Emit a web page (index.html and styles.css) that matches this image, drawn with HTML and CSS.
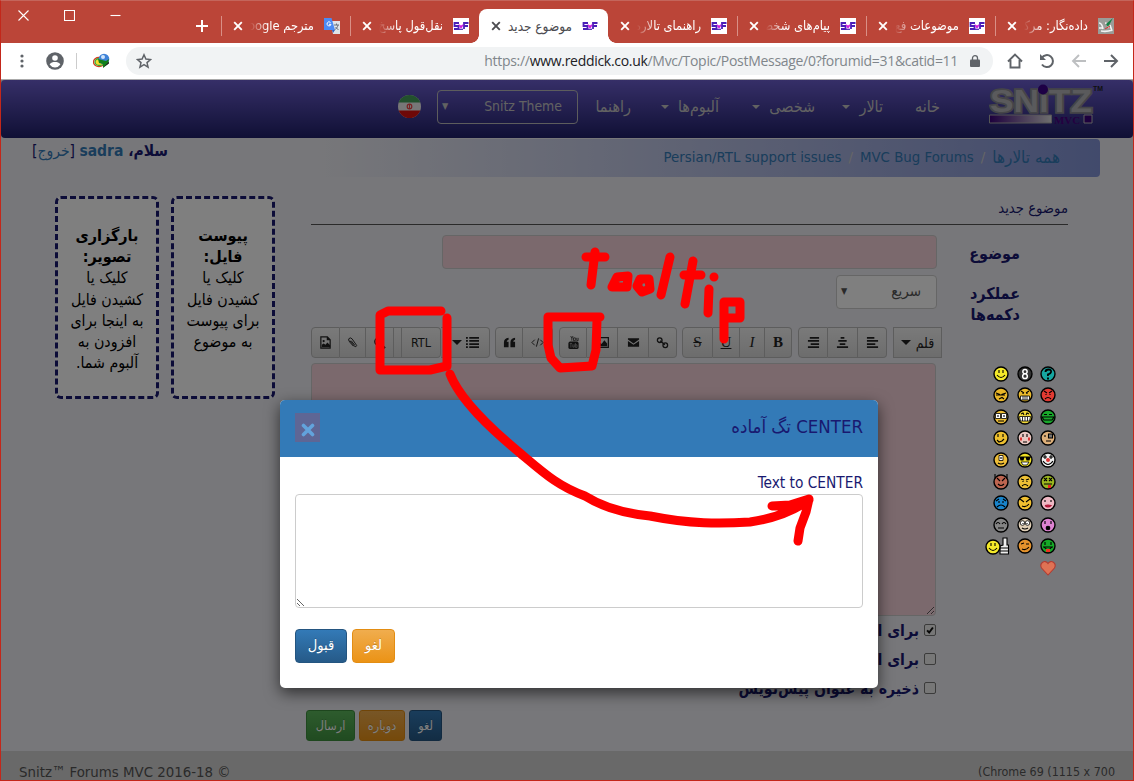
FILE: index.html
```html
<!DOCTYPE html>
<html lang="fa">
<head>
<meta charset="utf-8">
<title>موضوع جدید</title>
<link rel="stylesheet" href="styles.css">
</head>
<body>
<svg class="defs" width="0" height="0" aria-hidden="true">
  <symbol id="x" viewBox="0 0 10 10"><path d="M1.2 1.2l7.6 7.6M8.8 1.2L1.2 8.8" stroke="currentColor" stroke-width="1.9" fill="none"/></symbol>
  <symbol id="sf" viewBox="0 0 16 16"><path d="M6 5H1.500v3h4v3H1M15.500 5H11v6M11 8h4" fill="none" stroke="#4a1fb8" stroke-width="1.8"/><path d="M5.500 6l2.500 1.500L10.500 6 9.500 9 8 10.500 6.500 9z" fill="#d01ce0"/><path d="M6 11.300h4" stroke="#4a1fb8" stroke-width="1.200"/></symbol>
  <symbol id="face" viewBox="0 0 16 16"><circle cx="8" cy="8" r="7" stroke="#000" stroke-width="1.4"/></symbol>
</svg>
<div class="window">
  <header class="titlebar">
    <div class="controls">
      <svg width="11" height="11" viewBox="0 0 11 11"><path d="M.5 .5l10 10M10.500 .5l-10 10"/></svg>
      <svg width="11" height="11" viewBox="0 0 11 11"><path d="M.5 .5h10v10h-10z"/></svg>
      <svg width="11" height="11" viewBox="0 0 11 11"><path d="M.5 5.500h10"/></svg>
    </div>
    <div class="tabs" dir="rtl">
      <div class="tab"><svg class="fav" viewBox="0 0 16 16"><path fill="#9a9c98" d="M0 0h16v16H0z"/><path d="M1 5q3 0 4 6M3 13q6 1 11-1M7 5q4 0 3 5M12 7l2 6M1 10h4" stroke="#f2f2f2" stroke-width="1.600" fill="none"/><path d="M8 6l7-6-5 9z" fill="#138045"/><path d="M7 11l5-3" stroke="#d33"/></svg><span class="title">داده‌نگار: مرکز</span><svg class="close"><use href="#x"/></svg></div>
      <div class="tab"><svg class="fav white"><use href="#sf"/></svg><span class="title">موضوعات فع</span><svg class="close"><use href="#x"/></svg></div>
      <div class="tab"><svg class="fav white"><use href="#sf"/></svg><span class="title">پیام‌های شخص</span><svg class="close"><use href="#x"/></svg></div>
      <div class="tab plain"><svg class="fav white"><use href="#sf"/></svg><span class="title">راهنمای تالاره</span><svg class="close"><use href="#x"/></svg></div>
      <div class="tab active"><svg class="fav"><use href="#sf"/></svg><span class="title">موضوع جدید</span><svg class="close"><use href="#x"/></svg></div>
      <div class="tab"><svg class="fav white"><use href="#sf"/></svg><span class="title">نقل‌قول پاسخ</span><svg class="close"><use href="#x"/></svg></div>
      <div class="tab"><svg class="fav" viewBox="0 0 16 16"><path d="M6 3h10v13H9z" fill="#dfe3e8"/><path d="M0 0h7.500l3.500 12H0z" fill="#4b8bf5"/><path d="M8 12h3l-2 3z" fill="#2d5fc4"/><path d="M6.500 4.500A2 2 0 1 0 7 6.300H5" fill="none" stroke="#fff"/><path d="M10 7h5M12.500 5.500V7M14 7c-.5 2.500-2 4-3.500 5M11.500 9l3 3" stroke="#68717c" fill="none"/></svg><span class="title">مترجم Google</span><svg class="close"><use href="#x"/></svg></div>
    </div>
    <svg class="plus" viewBox="0 0 12 12"><path d="M6 0v12M0 6h12" stroke="#fff" stroke-width="2"/></svg>
  </header>
  <div class="addressbar">
    <div class="tools left">
      <svg width="4" height="14" viewBox="0 0 4 14" fill="#5f6368"><circle cx="2" cy="2" r="1.600"/><circle cx="2" cy="7" r="1.600"/><circle cx="2" cy="12" r="1.600"/></svg>
      <svg class="avatar" width="18" height="18" viewBox="0 0 18 18"><circle cx="9" cy="9" r="8.800" fill="#5f6368"/><circle cx="9" cy="6" r="2.800" fill="#fff"/><path d="M3.600 12.600c1-2 3.400-2.600 5.400-2.600s4.400.6 5.400 2.600A6.600 6.600 0 0 1 9 15.500a6.600 6.600 0 0 1-5.400-2.900z" fill="#fff"/></svg>
      <i class="rule"></i>
      <svg class="idm" width="18" height="16" viewBox="0 0 18 16"><ellipse cx="6" cy="9" rx="5.500" ry="4.500" fill="none" stroke="#d63c1f" stroke-width="1.300"/><ellipse cx="6.500" cy="9" rx="4.500" ry="3.500" fill="#f5dc2e" stroke="#3aa83a" stroke-width="1.300"/><circle cx="11" cy="6" r="5.300" fill="#3f82d8"/><circle cx="10" cy="4" r="2" fill="#cfe4fa"/><path d="M5 6l8 2 3-2-1 5-5 4v-4l-4-1z" fill="#12801a"/><path d="M10 14.500l6-6v2z" fill="#222"/></svg>
    </div>
    <div class="omnibox">
      <svg width="16" height="16" viewBox="0 0 16 16"><path d="M8 1.800l1.900 4.300 4.600.4-3.500 3.100 1.050 4.500L8 11.700l-4.050 2.400L5 9.600 1.500 6.500l4.600-.4z" fill="none" stroke="#5f6368" stroke-width="1.500"/></svg>
      <span class="url">https://<b>www.reddick.co.uk</b>/Mvc/Topic/PostMessage/0?forumid=31&amp;catid=11</span>
      <svg class="lock" width="10" height="12" viewBox="0 0 10 12"><path d="M1 4.500h8q1 0 1 1V11q0 1-1 1H1q-1 0-1-1V5.500q0-1 1-1z" fill="#5f6368"/><path d="M2.500 5V3a2.500 2.300 0 0 1 5 0v2" fill="none" stroke="#5f6368" stroke-width="1.300"/></svg>
    </div>
    <div class="tools right">
      <svg width="16" height="16" viewBox="0 0 16 16"><path d="M1 8.500L8 1.500l7 7M3.500 7v7.500h9V7" fill="none" stroke="#5f6368" stroke-width="1.900"/></svg>
      <svg width="16" height="16" viewBox="0 0 16 16"><path d="M2.800 5A6 6 0 1 1 3 11.500" fill="none" stroke="#5f6368" stroke-width="2"/><path d="M1 1v6h6z" fill="#5f6368"/></svg>
      <svg width="16" height="16" viewBox="0 0 16 16"><path d="M15 8H2M8 2L2 8l6 6" fill="none" stroke="#bdbfc1" stroke-width="1.900"/></svg>
      <svg width="16" height="16" viewBox="0 0 16 16"><path d="M1 8h13M8 2l6 6-6 6" fill="none" stroke="#5f6368" stroke-width="2"/></svg>
    </div>
  </div>

  <div class="page" dir="rtl">
    <nav class="navbar">
      <svg class="logo" width="115" height="44" viewBox="0 0 115 44"><defs><linearGradient id="lg"><stop offset="0" stop-color="#3a007a"/><stop offset="1" stop-color="#ddd"/></linearGradient></defs>
        <g font-family="Liberation Sans" font-weight="bold" direction="ltr"><text x="1" y="28" font-size="31" textLength="102" lengthAdjust="spacingAndGlyphs" fill="#b4b4b8" stroke="#8a8a90" stroke-width="3.500" paint-order="stroke">SNiTZ</text><text x="104" y="7" font-size="7" fill="#222" textLength="10" lengthAdjust="spacingAndGlyphs">TM</text></g><circle cx="54" cy="5.500" r="5" fill="#3a008a"/><path d="M.5 31h62v8H.5z" fill="url(#lg)" stroke="#aaa"/><path d="M95 31h8v8h-8z" fill="#3a007a" stroke="#bbb"/><text direction="ltr" x="65" y="39.500" font-family="Liberation Serif" font-weight="bold" font-size="11" textLength="26" lengthAdjust="spacingAndGlyphs" fill="#480080">MVC</text></svg>
      <a class="n1">خانه</a><a class="n2">تالار <i class="caret"></i></a><a class="n3">شخصی <i class="caret"></i></a><a class="n4">آلبوم‌ها <i class="caret"></i></a><a class="n5">راهنما</a>
      <span class="theme"><span>Snitz Theme</span><i>▼</i></span>
      <svg class="flag" width="23" height="23" viewBox="0 0 23 23"><clipPath id="fc"><circle cx="11.500" cy="11.500" r="11.500"/></clipPath><g clip-path="url(#fc)"><path fill="#eee" d="M0 0h23v23H0z"/><path fill="#45a05a" d="M0 0h23v7.500H0z"/><path fill="#dc1010" d="M0 15.500h23V23H0z"/></g><circle cx="11.500" cy="11.500" r="2.300" fill="none" stroke="#e44" stroke-width="1.200"/><path d="M11.500 9v5" stroke="#e44"/></svg>
    </nav>
    <div class="top">
      <div class="crumbs"><a class="fa">همه تالارها</a><i>/</i><a dir="ltr">MVC Bug Forums</a><i>/</i><a dir="ltr">Persian/RTL support issues</a></div>
      <div class="hello"><b>سلام، <a>sadra</a></b> [<a>خروج</a>]</div>
    </div>
    <main class="body">
      <section class="form">
        <h1>موضوع جدید</h1>
        <div class="row"><label>موضوع</label><span class="field subject"></span></div>
        <div class="row speed"><label>عملکرد<br>دکمه‌ها</label><span class="field select"><span>سریع</span><i>▼</i></span></div>
        <div class="editor">
          <div class="editcol" dir="ltr">
            <div class="bar">
              <span class="btn first" style="width:29px"><svg viewBox="0 0 14 14"><path d="M2 1h7l3 3v9H2zM9 1v3h3" fill="none" stroke="#222" stroke-width="1.300"/><path d="M3 12V9.500l2-1.500 2 1.500L9 7l3 3v2z"/><circle cx="5" cy="5.500" r="1.200"/></svg></span>
              <span class="btn" style="width:26px"><svg viewBox="0 0 14 14"><path d="M4 5l5 6q2 1.500 2.500-.8L6.500 3Q4.500 1 3 3q-.8 1.500 1 3.500l4 4.500M5.500 5l4 5" fill="none" stroke="#222"/></svg></span>
              <span class="btn" style="width:28px"><svg viewBox="0 0 14 14"><circle cx="6" cy="6" r="4" fill="none" stroke="#222" stroke-width="1.500"/><path d="M9 9l4 4" stroke="#222" stroke-width="2"/></svg></span>
              <span class="btn" style="width:8px"></span>
              <span class="btn rtl" style="width:39px">RTL</span>
              <span class="btn last list" style="width:49px"><i class="caret"></i><svg viewBox="0 0 14 14"><path d="M0 2h2M0 5.300h2M0 8.700h2M0 12h2M3.500 2H14M3.500 5.300H14M3.500 8.700H14M3.500 12H14" stroke="#222" stroke-width="1.900"/></svg></span>
              <span class="btn first gap5" style="width:28px"><svg viewBox="0 0 14 14"><path d="M1 7q0-4.500 5-5v2q-2 .5-2 2.200h2V12H1zM8 7q0-4.500 5-5v2q-2 .5-2 2.200h2V12H8z"/></svg></span>
              <span class="btn last" style="width:30px"><svg viewBox="0 0 14 14"><path d="M4 4L1 7l3 3M10 4l3 3-3 3M8.200 2.500l-2.400 9" fill="none" stroke="#222"/></svg></span>
              <span class="btn first gap6" style="width:28px"><svg viewBox="0 0 14 14"><path d="M4 0l1.200 2.500V5M6.500 0L5.200 2.500M7 2h2v3H7zM10.500 2v3H12V2" fill="none" stroke="#222" stroke-width=".8"/><rect x="1.500" y="6" width="11" height="8" rx="2"/><path d="M3 8h2.500M4.200 8v4.500M6.300 9v3h1.500V9M9 7.500v4.700h1.800V9.500H9" stroke="#aaa" stroke-width=".8" fill="none"/></svg></span>
              <span class="btn" style="width:31px"><svg viewBox="0 0 14 14"><path d="M.7 1.700h12.600v10.600H.7z" fill="none" stroke="#222" stroke-width="1.300"/><path d="M2 11V9l2.500-2L6 8.500 9 4.500 12 8v3z"/><circle cx="4" cy="4.500" r="1.200"/></svg></span>
              <span class="btn" style="width:31px"><svg viewBox="0 0 14 14"><path d="M1 2.500h12v1.300L7 8 1 3.800zM1 5.300L7 9.500l6-4.200v6.200H1z"/></svg></span>
              <span class="btn last" style="width:28px"><svg viewBox="0 0 14 14"><g fill="none" stroke="#222" stroke-width="1.400"><circle cx="4" cy="4.500" r="2.500"/><circle cx="10" cy="10" r="2.500"/><path d="M4.500 5l5 4.500"/></g></svg></span>
              <span class="btn first gap5" style="width:31px"><s>S</s></span>
              <span class="btn" style="width:27px"><u>U</u></span>
              <span class="btn" style="width:25px"><em>I</em></span>
              <span class="btn last" style="width:27px"><strong>B</strong></span>
              <span class="btn first gap6" style="width:30px"><svg viewBox="0 0 14 14"><path d="M3 2h10M1 5.300h12M4 8.700h9M1 12h12" stroke="#222" stroke-width="1.900"/></svg></span>
              <span class="btn" style="width:30px"><svg viewBox="0 0 14 14"><path d="M5 2h4M2.500 5.300h9M4 8.700h6M1 12h12" stroke="#222" stroke-width="1.900"/></svg></span>
              <span class="btn last" style="width:29px"><svg viewBox="0 0 14 14"><path d="M1 2h8M1 5.300h12M1 8.700h9M1 12h12" stroke="#222" stroke-width="1.900"/></svg></span>
              <span class="btn first last gap6 font" style="width:49px"><i class="caret"></i><span>قلم</span></span>
            </div>
            <textarea class="message"></textarea>
            <div class="checks" dir="rtl">
              <label><i class="box"><svg viewBox="0 0 12 12"><path d="M2.500 6.500l2.500 2.500 4.500-6" stroke="#111" stroke-width="2.400" fill="none"/></svg></i>برای ارسال</label>
              <label><i class="box"></i>برای ارسال</label>
              <label><i class="box"></i>ذخیره به عنوان پیش‌نویس</label>
            </div>
          </div>
          <div class="smilies" dir="ltr">
            <svg viewBox="0 0 16 16"><use href="#face" fill="#f4e92a"/><path d="M6 4v3M10 4v3M4 9q4 5 8 0"/></svg>
            <svg viewBox="0 0 16 16"><use href="#face" fill="#333"/><path d="M8 3.500a2 2 0 1 1 0 4.300 2.300 2.300 0 1 1 0 4.700 2.300 2.300 0 1 1 0-4.700 2 2 0 1 1 0-4.300z" class="w"/></svg>
            <svg viewBox="0 0 16 16"><use href="#face" fill="#16a5a0"/><path d="M5.500 6q0-2.500 3-2.500t2.500 2.500Q10.500 8 8 8.500V10M8 11.500v2" stroke-width="1.900"/></svg>
            <svg viewBox="0 0 16 16"><use href="#face" fill="#e8b528"/><path d="M3 6l4 1.500M8.500 7.500L13 6M3 8h9M6 12l3-1.500 2 1.500"/></svg>
            <svg viewBox="0 0 16 16"><use href="#face" fill="#e9b92b"/><path d="M4 4l3 2M12 4L9 6M6 6v1M10 6v1"/><path class="t" d="M3.500 9h9v4h-9zM6 9v4M8 9v4M10 9v4"/></svg>
            <svg viewBox="0 0 16 16"><use href="#face" fill="#e23a32"/><path d="M4 4l3 2M12 4L9 6M6 7v1M10 7v1M5 12q3-3 6 0"/></svg>
            <svg viewBox="0 0 16 16"><use href="#face" fill="#edbd35"/><path class="t" d="M2.500 4.500h5v5h-5zM8.500 4.500h5v5h-5z"/><path d="M5 6v2M11 6v2M5 12h6"/></svg>
            <svg viewBox="0 0 16 16"><use href="#face" fill="#f1d83a"/><path d="M4 5l2-1 1 2M9 6l1-2 2 1"/><path class="t" d="M2.500 7.500h11l-1 4.500h-9zM5.500 8v4M8 8v4M10.500 8v4"/></svg>
            <svg viewBox="0 0 16 16"><use href="#face" fill="#18a82b"/><path d="M4 5.500h3M9 5.500h3M2 8h12l-2 3H4z"/></svg>
            <svg viewBox="0 0 16 16"><use href="#face" fill="#edc02f"/><path d="M5 4v3M10 4v3M4 10l2 2 3-1 2-2"/></svg>
            <svg viewBox="0 0 16 16"><use href="#face" fill="#e8c6c0"/><path d="M6 4v3M10 4v3M6 12h4"/><path d="M3 9h2M11 9h2" stroke="#d33" stroke-width="3"/></svg>
            <svg viewBox="0 0 16 16"><use href="#face" fill="#deb07a"/><path d="M5 5v2M6 11h5"/><path d="M8.500 4h4v4h-4z" fill="#777"/></svg>
            <svg viewBox="0 0 16 16"><use href="#face" fill="#edbd38"/><path class="t" d="M6 3.500h4v5H6z"/><path d="M8 5v2M5 11q3 2 6 0"/></svg>
            <svg viewBox="0 0 16 16"><use href="#face" fill="#eee025"/><path d="M2 5h12M3 5l1 3h2l1-3M9 5l1 3h2l1-3" fill="#000"/><path class="t" d="M4 10h8l-2 3H6z"/></svg>
            <svg viewBox="0 0 16 16"><use href="#face" fill="#eee"/><path d="M5 3v4M3 5h4M11 3v4M9 5h4M3 9q5 7 10 0"/><circle cx="8" cy="8" r="2" fill="#d33" stroke="none"/></svg>
            <svg viewBox="0 0 16 16"><use href="#face" fill="#bd6550"/><path d="M2 0v4M14 0v4M4 4l3 3M12 4L9 7M5 10q3 3 6 0"/></svg>
            <svg viewBox="0 0 16 16"><use href="#face" fill="#edc035"/><path d="M4 5l3 1M12 5L9 6M6 7v1M10 7v1M5 12q3-3 6 0"/></svg>
            <svg viewBox="0 0 16 16"><use href="#face" fill="#9bb620"/><path d="M4 4l3 3M7 4L4 7M9 4l3 3M12 4L9 7M4 10h8"/><path d="M8 11h3v3H8z" fill="#e22" stroke="none"/></svg>
            <svg viewBox="0 0 16 16"><use href="#face" fill="#1884cb"/><path d="M3 6l3-2M13 6l-3-2M6 6v2M10 6v2M4 12q4-4 8 0"/></svg>
            <svg viewBox="0 0 16 16"><use href="#face" fill="#f0bf30"/><path d="M3 4l4 3M13 4L9 7M5 11q4 2 7-2"/></svg>
            <svg viewBox="0 0 16 16"><use href="#face" fill="#efb9c4"/><path d="M5 5v2M11 5v2"/><path d="M5 10.500q3-1 6 0-3 3-6 0" fill="#c24" stroke="#a13"/></svg>
            <svg viewBox="0 0 16 16"><use href="#face" fill="#848484"/><path d="M3 7q2-3 4 0M9 7q2-3 4 0M5 11h6"/></svg>
            <svg viewBox="0 0 16 16"><use href="#face" fill="#dfceb6"/><circle class="t" cx="5.500" cy="6" r="2.300"/><circle class="t" cx="10.500" cy="6" r="2.300"/><path d="M6 6v1M10 6v1M5 11q3 2 6 0"/></svg>
            <svg viewBox="0 0 16 16"><use href="#face" fill="#de83d2"/><path d="M5 4v3M11 4v3"/><circle cx="8" cy="11" r="1.800" fill="#000"/></svg>
            <svg class="thumb" viewBox="0 0 24 18"><path d="M18 1h4v7h1.500v9H15V9l3-1zM15 11h8M15 14h8" fill="#eee"/><g transform="translate(0 2)"><svg width="16" height="16"><use href="#face" fill="#f4e92a"/></svg><path d="M6 4v3M10 4v3M4 9q4 5 8 0"/></g></svg>
            <svg viewBox="0 0 16 16"><use href="#face" fill="#e4922c"/><path d="M4 6l3-1M9 6l3 0M5 11q4 2 7-2"/></svg>
            <svg viewBox="0 0 16 16"><use href="#face" fill="#16a927"/><path d="M5 4v3M11 4v3M3 9h10M4 9q4 5 8 0"/><path d="M6 11h4v3H6z" fill="#e32" stroke="none"/></svg>
            <svg class="heart" viewBox="0 0 16 16"><path d="M8 15L1.500 8C-1 3 5-1 8 3.500 11-1 17 3 14.500 8z" fill="#df7254" stroke="#b23c32"/></svg>
          </div>
        </div>
        <div class="actions" dir="ltr"><span class="green">ارسال</span><span class="orange">دوباره</span><span class="blue">لغو</span></div>
      </section>
      <aside class="drops">
        <div class="drop"><b>پیوست<br>فایل:</b><br>کلیک یا<br>کشیدن فایل<br>برای پیوست<br>به موضوع</div>
        <div class="drop"><b>بارگزاری<br>تصویر:</b><br>کلیک یا<br>کشیدن فایل<br>به اینجا برای<br>افزودن به<br>آلبوم شما.</div>
      </aside>
    </main>
    <footer><span class="ver" dir="ltr">(Chrome 69 (1115 x 700</span><span class="copy" dir="ltr">Snitz™ Forums MVC 2016-18 ©</span></footer>
    <div class="backdrop"></div>
  </div>

  <div class="modal" dir="rtl">
    <div class="modal-head"><span>CENTER تگ آماده</span><span class="dismiss"><svg viewBox="0 0 14 14"><path d="M2.500 2.500l9 9M11.500 2.500l-9 9" stroke="#62a3dc" stroke-width="3.600" stroke-linecap="round"/></svg></span></div>
    <div class="modal-body"><label dir="ltr">Text to CENTER</label><textarea></textarea>
      <div class="modal-actions" dir="ltr"><span class="blue">قبول</span><span class="orange">لغو</span></div>
    </div>
  </div>
  <svg class="ink" width="1134" height="781" viewBox="0 0 1134 781">
    <path d="M441 311H388L380 315V370H430L447 366L447 318"/>
    <path d="M600 317H548V345L551 358L560 368L592 366L596 350L597 320"/>
    <path d="M595 252L591 285M586 257H605M628 276L617 277L612 287L627 287L628 276M649 279L640 279L637 286L642 292L650 289L649 279M670 257L661 295M693 261L685 304M684 275H701M714 277V277.100M709 289L708 313M724 302V339M724 302L740 302L740 318L727 318"/>
    <path d="M450 374C460 400 490 428 520 453C545 474 558 486 585 496C604 508 630 514 650 516C690 524 720 524 750 522Q785 517 809 500M772 506L790 505L809 499L806 512L800 528L798 541"/>
  </svg>
</div>
</body>
</html>
```
FILE: styles.css
```css
* { box-sizing: border-box; }
body { margin: 0; overflow: hidden; font: 15px/21.4px "DejaVu Sans Condensed", "DejaVu Sans", sans-serif; }
i { font-style: normal; }
.defs { position: absolute; }
.window { position: relative; width: 1134px; height: 781px; border: 1px solid #c3271a; border-top-color: #c4655b; display: flex; flex-direction: column; background: #fff; }
.titlebar { height: 42px; background: #bb4538; display: flex; color: #fff; }
.controls { display: flex; gap: 35px; padding: 9px 0 0 17px; width: 190px; }
.controls svg { fill: none; stroke: #fff; stroke-width: 1.1; }
.tabs { order: 2; margin-left: auto; margin-right: 9px; padding-top: 8px; display: flex; }
.plus { order: 1; width: 12px; height: 12px; margin: 19px 0 0 5px; }
.tab { width: 129px; height: 34px; padding: 0 10px 0 11px; display: flex; align-items: center; font: 12.800px/20px "DejaVu Sans Condensed", sans-serif; position: relative; border-left: 1px solid transparent; }
.tab:not(.active):not(.plain)::after { content: ""; position: absolute; left: -1px; top: 7px; height: 20px; border-left: 1px solid #d98f86; }
.fav { width: 16px; height: 16px; flex: none; }
.white { background: #fff; }
.title { width: 66px; margin: 0 10px 0 5px; white-space: nowrap; overflow: hidden; -webkit-mask-image: linear-gradient(to right, transparent 2px, #000 20px); }
.close { width: 10px; height: 10px; flex: none; margin-right: auto; }
.active { background: #fff; border-radius: 8px 8px 0 0; color: #4c4c50; }
.active .title { -webkit-mask-image: none; font-size: 13.500px; overflow: visible; }
.active::before, .active::after { content: ""; position: absolute; bottom: 0; width: 8px; height: 8px; }
.active::before { right: -8px; background: radial-gradient(circle at 100% 0, transparent 7.500px, #fff 8px); }
.active::after { left: -9px; background: radial-gradient(circle at 0 0, transparent 7.500px, #fff 8px); }
.addressbar { height: 36px; display: flex; align-items: center; background: #fff; }
.tools { display: flex; align-items: center; }
.left { width: 125px; padding-left: 19px; }
.avatar { margin-left: 22px; }
.rule { width: 1px; height: 16px; background: #ccc; margin: 0 16px 0 12px; }
.omnibox { width: 867px; height: 28px; border-radius: 14px; background: #f1f3f4; display: flex; align-items: center; padding: 0 13px 0 10px; }
.url { margin-left: auto; font: 14px/20px "Open Sans", sans-serif; letter-spacing: -.3px; color: #80868b; }
.url b { font-weight: 400; color: #202124; }
.lock { margin-left: 12px; }
.right { padding-left: 14px; gap: 16px; }
.page { position: relative; flex: 1; background: #efeff4; border-top: 1px solid #aaa; overflow: hidden; color: #191970; display: flex; flex-direction: column; }
.backdrop { position: absolute; inset: 0; background: rgba(0,0,0,.5); }
.navbar { flex: none; height: 58px; border-radius: 4px; background: linear-gradient(#6c5ed0, #20206a); display: flex; align-items: center; padding-right: 29px; color: #c4c4c4; font-size: 16px; }
.logo { margin-top: -6px; flex: none; }
.navbar a { display: flex; align-items: center; gap: 9px; white-space: nowrap; margin-top: -5px; flex: none; }
.n1 { margin-right: 49px; width: 57px; }
.n2 { width: 68px; } .n3 { width: 96px; } .n4 { width: 88px; } .n5 { width: 53px; }
.caret { border: 4px solid transparent; border-top-color: currentColor; border-bottom: 0; display: block; }
.theme { width: 141px; height: 34px; margin-top: -5px; border: 1px solid #bbb; border-radius: 4px; display: flex; align-items: center; justify-content: space-between; padding: 0 15px 0 4px; font-size: 13.900px; flex: none; }
.theme i, .select i { font-size: 9px; }
.flag { margin: -6px 16px 0 0; }
.top { display: flex; height: 58px; flex: none; padding: 1px 33px 0 0; }
.crumbs { width: 783px; height: 38px; border-radius: 4px; background: linear-gradient(to right, #efeff4, #8495d8); padding: 8px 40px 0 0; display: flex; gap: 7px; font-size: 14.850px; white-space: nowrap; }
.crumbs .fa { font-size: 17px; }
.crumbs i { color: #ccc; }
.top a { color: #337ab7; }
.hello { margin-right: auto; padding: 2px 0 0 31px; font-size: 15.500px; }
.body { display: flex; height: 555px; flex: none; }
.form { width: 822px; padding: 0 65px 0 0; }
h1 { font-size: 14.700px; font-weight: 400; margin: 0; height: 29px; padding-top: 1px; border-bottom: 1px solid #555; width: 757px; }
.row { display: flex; padding-top: 10px; }
.row label { width: 101px; margin: 8px 0 0 30px; padding-right: 48px; font-weight: 700; white-space: nowrap; font-size: 16px; }
.field { height: 34px; border: 1px solid #ccc; border-radius: 4px; background: #f6d2db; }
.subject { width: 495px; }
.speed { padding-top: 6px; height: 58px; }
.select { width: 101px; background: #fff; color: #555; display: flex; justify-content: space-between; align-items: center; padding: 0 15px 0 4px; font-size: 15px; }
.editor { display: flex; width: 757px; height: 383px; }
.editcol { width: 631px; order: 2; }
.bar { display: flex; height: 36px; color: #222; }
.btn { height: 31px; flex: none; border: 1px solid #bbb; border-left-width: 0; background: linear-gradient(#f4f4f4, #dadada); display: flex; align-items: center; justify-content: center; font: 15px "Liberation Serif", serif; }
.btn svg { width: 13px; height: 13px; fill: #222; }
.btn.first { border-left-width: 1px; border-radius: 4px 0 0 4px; }
.btn.last { border-radius: 0 4px 4px 0; }
.btn.rtl { font: 12.500px "DejaVu Sans Condensed", sans-serif; border-radius: 0 4px 4px 0; }
.btn.list { gap: 4px; }
.btn.font { gap: 5px; font: 14px "DejaVu Sans Condensed", sans-serif; border-radius: 0; }
.btn .caret { border-width: 5px 5px 0; }
.gap5 { margin-left: 5px; } .gap6 { margin-left: 6px; }
.message { display: block; width: 625px; height: 253px; margin: 0; border: 1px solid #ccc; border-radius: 4px; background: #f6d2db; resize: both; }
.checks { width: 625px; }
.checks label { display: flex; align-items: center; gap: 5px; height: 29px; font-weight: 700; font-size: 15.700px; }
.box { width: 12px; height: 12px; border: 1px solid #777; border-radius: 2px; background: #eee; display: flex; margin-top: -2px; }
.smilies { width: 126px; padding: 36px 8px 0 0; display: grid; grid-template-columns: repeat(3, 23.500px); grid-auto-rows: 21.550px; justify-content: end; align-content: start; justify-items: center; align-items: center; position: relative; z-index: 1; }
.smilies svg { width: 16px; height: 16px; fill: none; stroke: #000; stroke-width: 1.1; overflow: visible; }
.smilies use { stroke: none; }
.smilies .w { stroke: #fff; stroke-width: 1.5; }
.smilies .t { fill: #fff; stroke-width: .8; }
.smilies .thumb { width: 24px; height: 18px; margin-left: -8px; }
.smilies .heart { grid-column: 3; }
.actions { display: flex; gap: 4px; width: 762px; }
.actions span, .modal-actions span { height: 31px; display: flex; align-items: center; justify-content: center; border-radius: 3px; color: #fff; font-size: 12.500px; text-shadow: 0 -1px 0 rgba(0,0,0,.2); }
.green { width: 49px; background: linear-gradient(#5cb85c, #419641); border: 1px solid #3e8f3e; }
.orange { width: 46px; background: linear-gradient(#f0ad4e, #eb9316); border: 1px solid #e38d13; }
.blue { width: 33px; background: linear-gradient(#337ab7, #265a88); border: 1px solid #245580; }
.drops { display: flex; gap: 12px; padding-right: 36px; }
.drop { width: 104px; height: 203px; border: 3px dashed #191970; border-radius: 6px; background: #fff; color: #000; text-align: center; padding: 26px 0 0; font-size: 15.800px; line-height: 21.200px; white-space: nowrap; }
.drop b { font-size: 16px; }
footer { flex: 1; background: #d3d3d3; color: #555; display: flex; justify-content: space-between; padding: 10px 18px 0 18px; }
.ver { font-size: 12.400px; } .copy { font-size: 14.850px; padding-top: 1px; }
.modal { position: absolute; left: 279px; top: 399px; width: 598px; height: 288px; background: #fff; border-radius: 5px; box-shadow: 0 5px 15px rgba(0,0,0,.6); overflow: hidden; color: #191970; }
.modal-head { height: 57px; background: #337ab7; display: flex; justify-content: space-between; padding: 13px 15px 0; font-size: 18.500px; line-height: 28px; }
.dismiss { width: 25px; height: 29px; background: #5e6695; display: flex; align-items: flex-end; justify-content: center; padding-bottom: 5px; }
.dismiss svg { width: 14px; height: 14px; }
.modal-body { padding: 16px 15px 0; display: flex; flex-direction: column; }
.modal-body label { height: 21px; align-self: flex-start; font-size: 15.300px; }
.modal-body textarea { width: 568px; height: 114px; margin: 0; border: 1px solid #ccc; border-radius: 4px; resize: both; }
.modal-actions { display: flex; gap: 5px; padding-top: 21px; }
.modal-actions span { height: 34px; border-radius: 4px; font-size: 14.500px; }
.modal-actions .blue { width: 52px; } .modal-actions .orange { width: 43px; }
.ink { position: absolute; left: -1px; top: -1px; fill: none; stroke: #f00; stroke-width: 9; stroke-linecap: round; stroke-linejoin: round; pointer-events: none; }
```
